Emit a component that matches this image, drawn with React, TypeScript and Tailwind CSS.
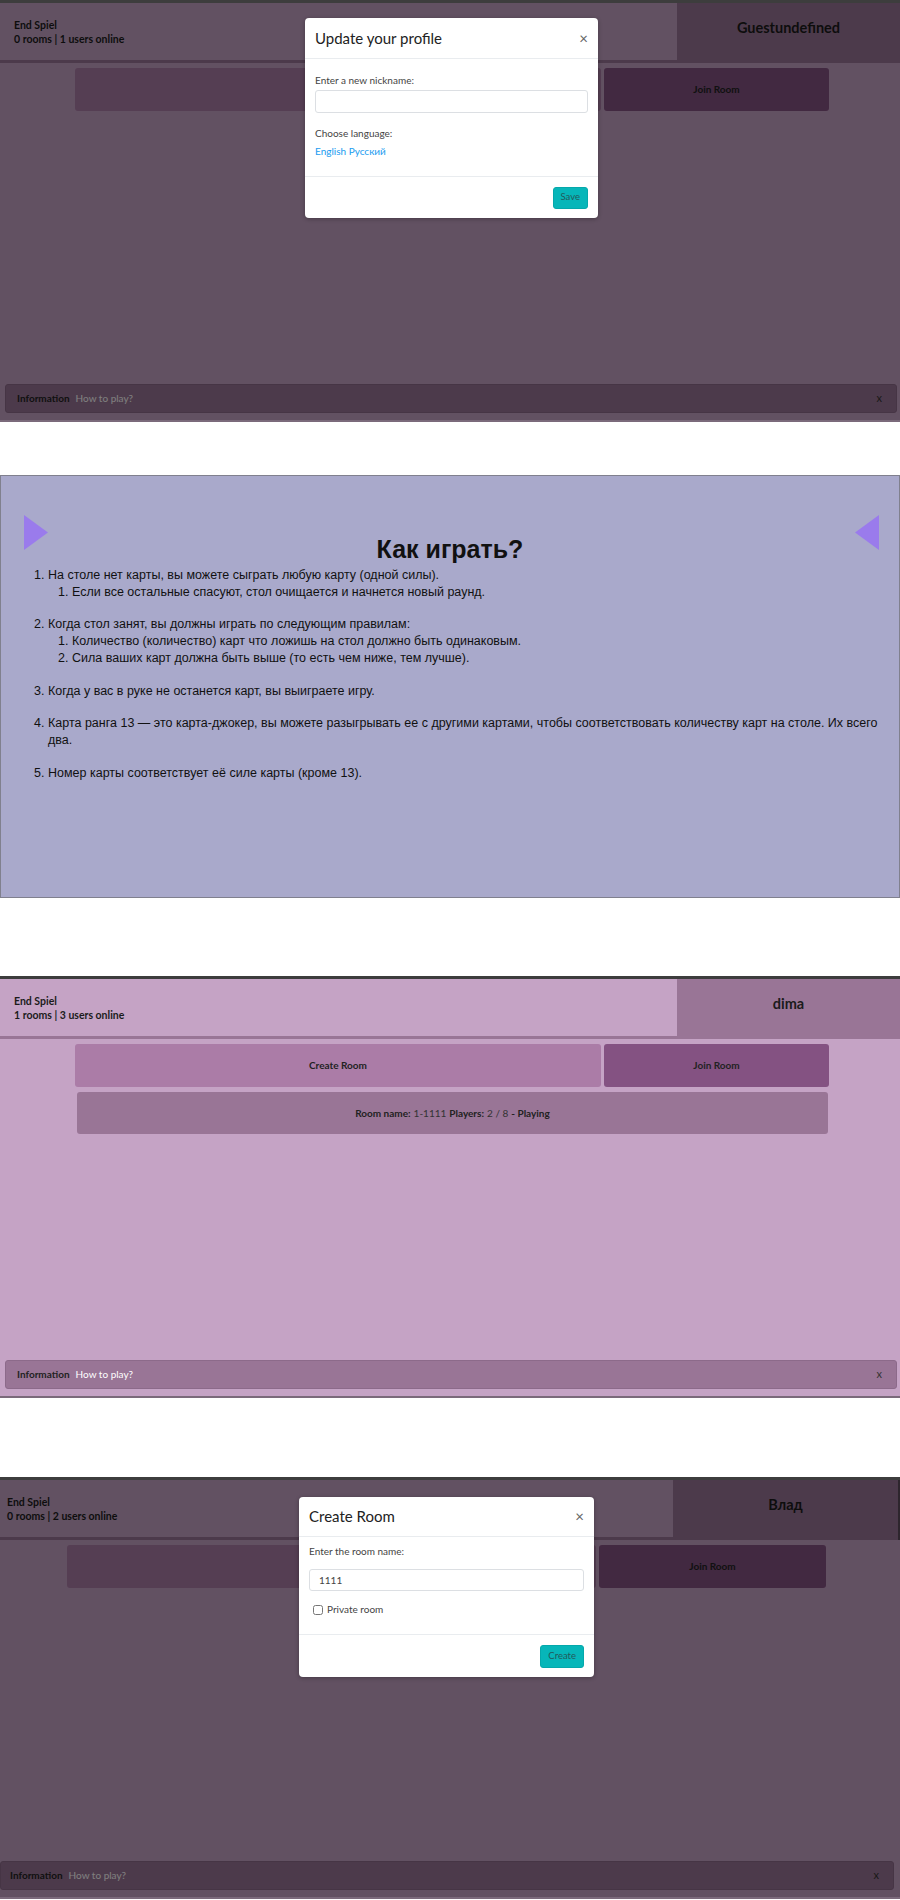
import React from "react";

const ui = "font-['Segoe_UI','Lato','Open_Sans',sans-serif]";
const comic = "font-['Comic_Sans_MS','Liberation_Sans',sans-serif]";

type Variant = "a" | "b";

function Lobby({
  rooms,
  users,
  name,
  variant = "a",
  showRoom = false,
  children,
}: {
  rooms: number;
  users: number;
  name: string;
  variant?: Variant;
  showRoom?: boolean;
  children?: React.ReactNode;
}) {
  const b = variant === "b";
  return (
    <div className={`relative h-[422px] bg-[#c5a3c5] border-t-[3px] border-b-2 border-t-[#3d3d3d] border-b-[#7b6a7b] flex flex-col ${ui}`}>
      {/* header */}
      <div className="flex">
        <div
          className={`flex-1 h-[60px] border-b-[3px] border-[#997596] flex flex-col pt-[15px] text-[10.5px] font-bold leading-[14px] text-[#1b1b1b] ${
            b ? "pl-[7px]" : "pl-[14px]"
          }`}
        >
          <div>End Spiel</div>
          <div>
            {rooms} rooms | {users} users online
          </div>
        </div>
        <div
          className={`h-[60px] bg-[#997596] flex justify-center pt-[15px] text-[14.5px] font-bold leading-[20px] text-[#1b1b1b] ${
            b ? "w-[227px] border-r-2 border-[#5a4a5a]" : "w-[223px]"
          }`}
        >
          {name}
        </div>
      </div>

      {/* buttons */}
      <div className={`mt-[5px] flex gap-[3px] ${b ? "ml-[67px]" : "ml-[75px]"}`}>
        <div
          className={`h-[43px] rounded-[3px] bg-[#ab7ca7] flex items-center justify-center text-[10px] font-bold text-[#222] ${
            b ? "w-[529px]" : "w-[526px]"
          }`}
        >
          Create Room
        </div>
        <div
          className={`h-[43px] rounded-[3px] bg-[#845282] flex items-center justify-center text-[10px] font-bold text-[#222] ${
            b ? "w-[227px]" : "w-[225px]"
          }`}
        >
          Join Room
        </div>
      </div>

      {showRoom && (
        <div className="mt-[5px] ml-[77px] w-[751px] h-[42px] rounded-[3px] bg-[#997596] flex items-center justify-center text-[10px] text-[#222]">
          <span className="font-bold">Room name:</span>
          <span className="ml-[3px] text-[#333]">1-1111</span>
          <span className="ml-[3px] font-bold">Players:</span>
          <span className="ml-[3px] text-[#333]">2 / 8</span>
          <span className="ml-[3px] font-bold">- Playing</span>
        </div>
      )}

      {/* information bar */}
      <div
        className={`mt-auto mb-[7px] h-[29px] rounded-[3px] border border-[#8c6a8a] bg-[#997596] flex items-center text-[10px] ${
          b ? "ml-0 mr-[6px] pl-[9px] pr-[14px]" : "ml-[5px] mr-[3px] pl-[11px] pr-[14px]"
        }`}
      >
        <span className="font-bold text-[#222]">Information</span>
        <span className="ml-[6px] text-white">How to play?</span>
        <span className="ml-auto text-[#333] text-[11px]">x</span>
      </div>

      {children}
    </div>
  );
}

function Modal({
  left,
  top,
  width,
  children,
}: {
  left: string;
  top: string;
  width: string;
  children: React.ReactNode;
}) {
  return (
    <div className={`absolute inset-0 bg-black/50 flex items-start ${left} ${top}`}>
      <div className={`${width} bg-white rounded-[4px] shadow-[0_1px_4px_rgba(0,0,0,0.3)]`}>{children}</div>
    </div>
  );
}

function Triangle({ dir }: { dir: "left" | "right" }) {
  return (
    <svg width="24" height="35" viewBox="0 0 24 35">
      {dir === "right" ? (
        <polygon points="0,0 24,17.5 0,35" fill="#9a7bec" />
      ) : (
        <polygon points="24,0 0,17.5 24,35" fill="#9a7bec" />
      )}
    </svg>
  );
}

export default function App() {
  return (
    <div className="w-[900px] bg-white">
      {/* 1: profile modal */}
      <Lobby rooms={0} users={1} name="Guestundefined">
        <Modal left="pl-[305px]" top="pt-[15px]" width="w-[293px]">
          <div className="h-[41px] border-b border-[#e9ecef] flex items-center justify-between px-[10px]">
            <span className="text-[15px] text-[#222]">Update your profile</span>
            <span className="text-[15px] text-[#666] leading-none">×</span>
          </div>
          <div className="px-[10px] pt-[14px] pb-[17px] text-[10px] leading-[15px] text-[#444]">
            <div>Enter a new nickname:</div>
            <div className="mt-[2px] h-[23px] rounded-[3px] border border-[#dcdfe3]" />
            <div className="mt-[13px]">Choose language:</div>
            <div className="mt-[3px] text-[#1a9cf0]">English Русский</div>
          </div>
          <div className="h-[42px] border-t border-[#e9ecef] flex items-center justify-end pr-[10px]">
            <div className="h-[22px] px-[7px] rounded-[3px] bg-[#07b6b9] border border-[#05a8ab] flex items-center text-[9.5px] text-[#215a5c]">
              Save
            </div>
          </div>
        </Modal>
      </Lobby>

      {/* 2: rules */}
      <div className={`mt-[53px] h-[423px] bg-[#a9a9cb] border border-[#80808e] pt-[39px] ${comic} text-[#111]`}>
        <div className="flex justify-between pl-[23px] pr-[20px]">
          <Triangle dir="right" />
          <Triangle dir="left" />
        </div>
        <h2 className="-mt-[17px] text-center text-[25px] font-bold leading-[32px]">Как играть?</h2>
        <ol className="mt-[2px] list-decimal pl-[47px] pr-[12px] text-[12.5px] leading-[16.7px]">
          <li className="mb-[16px]">
            На столе нет карты, вы можете сыграть любую карту (одной силы).
            <ol className="list-decimal pl-[24px]">
              <li>Если все остальные спасуют, стол очищается и начнется новый раунд.</li>
            </ol>
          </li>
          <li className="mb-[16px]">
            Когда стол занят, вы должны играть по следующим правилам:
            <ol className="list-decimal pl-[24px]">
              <li>Количество (количество) карт что ложишь на стол должно быть одинаковым.</li>
              <li>Сила ваших карт должна быть выше (то есть чем ниже, тем лучше).</li>
            </ol>
          </li>
          <li className="mb-[16px]">Когда у вас в руке не останется карт, вы выиграете игру.</li>
          <li className="mb-[16px]">
            Карта ранга 13 — это карта-джокер, вы можете разыгрывать ее с другими картами, чтобы соответствовать
            количеству карт на столе. Их всего два.
          </li>
          <li>Номер карты соответствует её силе карты (кроме 13).</li>
        </ol>
      </div>

      {/* 3: lobby */}
      <div className="mt-[78px]">
        <Lobby rooms={1} users={3} name="dima" showRoom />
      </div>

      {/* 4: create room modal */}
      <div className="mt-[79px] h-[423px] overflow-hidden">
        <Lobby rooms={0} users={2} name="Влад" variant="b">
          <Modal left="pl-[299px]" top="pt-[17px]" width="w-[295px]">
            <div className="h-[40px] border-b border-[#e9ecef] flex items-center justify-between px-[10px]">
              <span className="text-[15px] text-[#222]">Create Room</span>
              <span className="text-[15px] text-[#666] leading-none">×</span>
            </div>
            <div className="px-[10px] pt-[7px] pb-[17px] text-[10px] leading-[15px] text-[#444]">
              <div>Enter the room name:</div>
              <div className="mt-[10px] h-[22px] rounded-[3px] border border-[#dcdfe3] flex items-center pl-[9px] text-[#444]">
                1111
              </div>
              <div className="mt-[11px] flex items-center gap-[4px] pl-[4px]">
                <input type="checkbox" readOnly className="w-[10px] h-[10px] m-0" />
                <span>Private room</span>
              </div>
            </div>
            <div className="h-[43px] border-t border-[#e9ecef] flex items-center justify-end pr-[10px]">
              <div className="h-[23px] px-[7px] rounded-[3px] bg-[#07b6b9] border border-[#05a8ab] flex items-center text-[9.5px] text-[#215a5c]">
                Create
              </div>
            </div>
          </Modal>
        </Lobby>
      </div>
    </div>
  );
}
